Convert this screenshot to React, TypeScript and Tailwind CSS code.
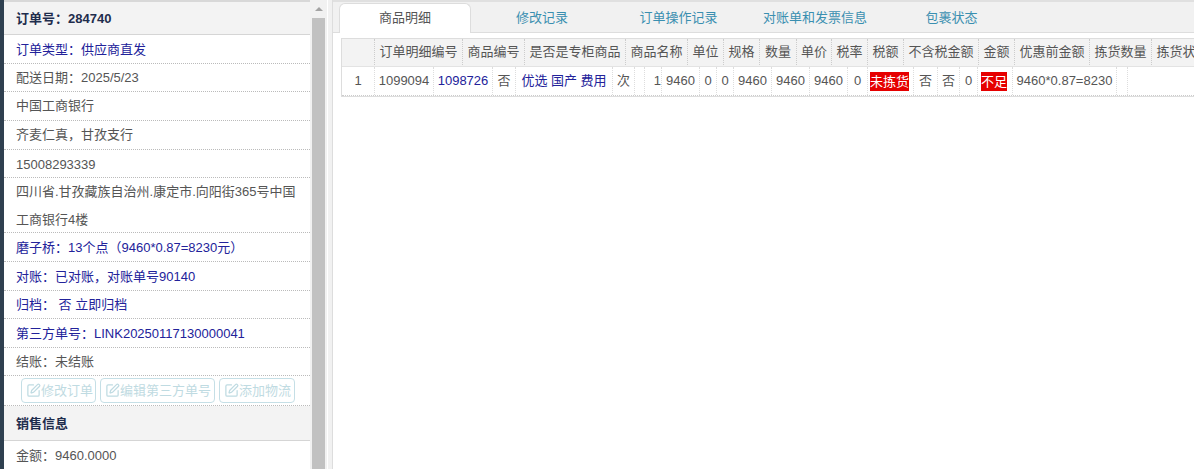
import { SquarePen } from 'lucide-react'

const cn = '[font-family:"Liberation_Sans","Noto_Sans_CJK_SC",sans-serif]'

const infoRows = [
  { text: '订单类型：供应商直发', blue: true, h: 'h-[29px]', lh: 'leading-[30px]' },
  { text: '配送日期：2025/5/23', h: 'h-[28px]' },
  { text: '中国工商银行', h: 'h-[29px]' },
  { text: '齐麦仁真，甘孜支行', h: 'h-[29px]' },
  { text: '15008293339', h: 'h-[28px]', lh: 'leading-[30px]' },
  { text: '四川省.甘孜藏族自治州.康定市.向阳街365号中国工商银行4楼', h: 'h-[55px]' },
  { text: '磨子桥：13个点（9460*0.87=8230元）', blue: true, h: 'h-[29px]', lh: 'leading-[30px]' },
  { text: '对账：已对账，对账单号90140', blue: true, h: 'h-[29px]', lh: 'leading-[30px]' },
  { text: '归档： 否 立即归档', blue: true, h: 'h-[28px]' },
  { text: '第三方单号：LINK20250117130000041', blue: true, h: 'h-[29px]', lh: 'leading-[30px]' },
  { text: '结账：未结账', h: 'h-[28px]' },
]

const actions = [
  { name: '修改订单', w: 'w-[75px]' },
  { name: '编辑第三方单号', w: 'w-[115px]' },
  { name: '添加物流', w: 'w-[76px]' },
]

const tabs = [
  { name: '商品明细', w: 'w-[132px]', active: true },
  { name: '修改记录', w: 'w-[131px]' },
  { name: '订单操作记录', w: 'w-[131px]' },
  { name: '对账单和发票信息', w: 'w-[131px]' },
  { name: '包裹状态', w: 'w-[131px]' },
]

const headCols = [
  { t: '', w: 'w-[33px]' },
  { t: '订单明细编号', w: 'w-[88px]' },
  { t: '商品编号', w: 'w-[62px]' },
  { t: '是否是专柜商品', w: 'w-[101px]' },
  { t: '商品名称', w: 'w-[62px]' },
  { t: '单位', w: 'w-[36px]' },
  { t: '规格', w: 'w-[36px]' },
  { t: '数量', w: 'w-[37px]' },
  { t: '单价', w: 'w-[35px]' },
  { t: '税率', w: 'w-[36px]' },
  { t: '税额', w: 'w-[36px]' },
  { t: '不含税金额', w: 'w-[75px]' },
  { t: '金额', w: 'w-[36px]' },
  { t: '优惠前金额', w: 'w-[75px]' },
  { t: '拣货数量', w: 'w-[62px]' },
  { t: '拣货状态', w: 'w-[62px]' },
]

const bodyCols = [
  { t: '1', w: 'w-[33px]', c: 'justify-center' },
  { t: '1099094', w: 'w-[59px]' },
  { t: '1098726', w: 'w-[59px]', blue: true },
  { t: '否', w: 'w-[23px]' },
  { t: '优选 国产 费用', w: 'w-[97px]', blue: true },
  { t: '次', w: 'w-[22px]' },
  { t: '', w: 'w-[10px]' },
  { t: '1', w: 'w-[17px]', c: 'justify-end' },
  { t: '9460', w: 'w-[38px]' },
  { t: '0', w: 'w-[17px]' },
  { t: '0', w: 'w-[17px]' },
  { t: '9460', w: 'w-[38px]' },
  { t: '9460', w: 'w-[38px]' },
  { t: '9460', w: 'w-[38px]' },
  { t: '0', w: 'w-[20px]' },
  { t: '未拣货', w: 'w-[46px]', red: true, c: 'justify-start pl-[2px]' },
  { t: '否', w: 'w-[24px]' },
  { t: '否', w: 'w-[22px]' },
  { t: '0', w: 'w-[18px]' },
  { t: '不足', w: 'w-[35px]', red: true, c: 'justify-start pl-[3px]' },
  { t: '9460*0.87=8230', w: 'w-[104px]' },
  { t: '', w: 'w-[11px]' },
]

export default function App() {
  return (
    <div className={`h-[469px] w-[1194px] overflow-hidden bg-white text-[13px] text-[#555] flex ${cn}`}>
      {/* 左侧订单信息 */}
      <div className="w-[4px] shrink-0 bg-[#2f4050]" />
      <div className="w-[306px] shrink-0 bg-white border-t-2 border-t-[#d8d8d8]">
        <div className="h-[33px] bg-[#f3f3f3] border-b border-[#d5d5d5] px-3 pt-px flex items-center font-bold text-[#1f2d4d]">
          订单号：284740
        </div>
        {infoRows.map((row) => (
          <div
            key={row.text}
            className={`${row.h} px-3 border-b border-dotted border-[#bbb] ${row.lh ?? 'leading-[28px]'} ${row.blue ? 'text-[#22229a]' : ''}`}
          >
            {row.text}
          </div>
        ))}
        <div className="h-[30px] flex items-center gap-1 pl-[17px] border-b border-dotted border-[#bbb]">
          {actions.map((b) => (
            <div key={b.name} className={`${b.w} shrink-0 h-[25px] pl-[4px] flex items-center whitespace-nowrap border border-[#c5dfe6] rounded text-[#bfdbe2]`}>
              <SquarePen size={15} strokeWidth={2} className="shrink-0" />
              <span>{b.name}</span>
            </div>
          ))}
        </div>
        <div className="h-[35px] bg-[#f3f3f3] border-b border-[#d5d5d5] px-3 pt-px flex items-center font-bold text-[#1f2d4d]">
          销售信息
        </div>
        <div className="h-[28px] px-3 leading-[30px]">金额：9460.0000</div>
      </div>

      {/* 滚动条 */}
      <div className="w-[17px] shrink-0 bg-[#f1f1f1] flex flex-col items-center">
        <div className="h-[18px] w-full flex items-center justify-center">
          <div className="w-0 h-0 border-x-[4px] border-x-transparent border-b-[4px] border-b-[#a3a3a3]" />
        </div>
        <div className="flex-1 w-[13px] bg-[#c1c1c1]" />
      </div>

      {/* 分隔 */}
      <div className="w-[6px] shrink-0 bg-[#f1f1f1] border-l border-l-white border-r border-r-[#ddd]" />

      {/* 右侧内容 */}
      <div className="flex-1 min-w-0">
        <div className="h-[33px] bg-[#f1f1f1] border-b border-[#ddd] border-t-2 border-t-[#e0e0e0] flex items-end gap-[5.5px] pl-[6px]">
          {tabs.map((tab) => (
            <div
              key={tab.name}
              className={`${tab.w} shrink-0 h-[30px] -mb-px pb-px flex items-center justify-center rounded-t-md ${
                tab.active ? 'bg-white border border-b-0 border-[#ddd] text-[#555]' : 'text-[#3a8fb0]'
              }`}
            >
              {tab.name}
            </div>
          ))}
        </div>

        <div className="mt-[5px] ml-[8px] border border-[#ddd] border-r-0 h-[59px] overflow-hidden">
          <div className="h-[28px] pb-px bg-[#f3f3f3] border-b border-[#e3e3e3] flex whitespace-nowrap">
            {headCols.map((col, i) => (
              <div key={i} className={`${col.w} shrink-0 border-r border-dotted border-[#ccc] flex items-center justify-center`}>
                {col.t}
              </div>
            ))}
          </div>
          <div className="h-[29px] flex whitespace-nowrap border-b border-dotted border-[#ccc]">
            {bodyCols.map((col, i) => (
              <div
                key={i}
                className={`${col.w} shrink-0 border-r border-dotted border-[#ddd] flex items-center ${col.c ?? 'justify-center'} ${col.blue ? 'text-[#22229a]' : ''}`}
              >
                {col.red ? <span className="bg-[#e60000] text-white leading-[19px]">{col.t}</span> : col.t}
              </div>
            ))}
          </div>
        </div>
      </div>
    </div>
  )
}
